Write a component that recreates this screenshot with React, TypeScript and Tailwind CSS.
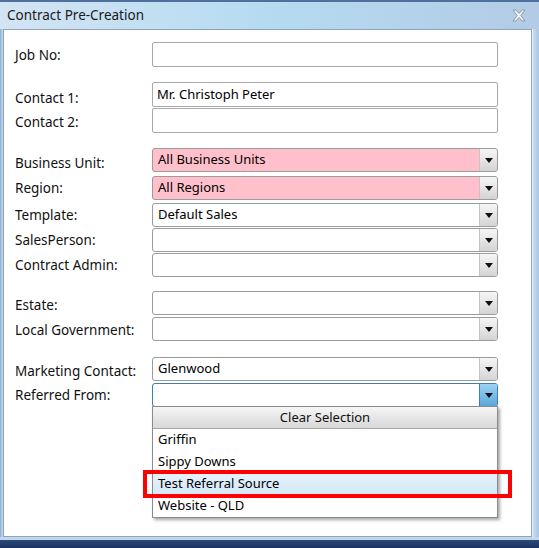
import React from "react";

const font = { fontFamily: '"Noto Sans", "Open Sans", sans-serif' };

function Arrow({ active }: { active?: boolean }) {
  return (
    <div
      className={
        "w-[18px] h-full shrink-0 flex items-center justify-center border-l " +
        (active
          ? "bg-gradient-to-b from-[#9dd3f3] to-[#5aa6da] border-[#3c7fb1]"
          : "bg-gradient-to-b from-[#f6f6f6] to-[#d4d4d4] border-[#c4c4c4]")
      }
    >
      <svg width="8" height="5" viewBox="0 0 8 5">
        <path d="M0 0 H8 L4 5 Z" fill="#111" />
      </svg>
    </div>
  );
}

function TextBox({ value }: { value?: string }) {
  return (
    <div className="w-[346px] h-[25px] shrink-0 border border-[#a7a9ad] rounded-[2px] bg-white flex items-center pl-[4px] text-[13px] text-black whitespace-nowrap">
      {value}
    </div>
  );
}

function Combo({ value, pink, active }: { value?: string; pink?: boolean; active?: boolean }) {
  return (
    <div
      className={
        "w-[346px] h-[24px] shrink-0 border rounded-[3px] overflow-hidden flex " +
        (active ? "border-[#3c7fb1]" : "border-[#9a9b9d]") +
        " " +
        (pink ? "bg-[#ffc0cb]" : "bg-white")
      }
    >
      <div className="flex-1 flex items-center pl-[5px] text-[13px] text-black whitespace-nowrap">{value}</div>
      <Arrow active={active} />
    </div>
  );
}

function Row({
  label,
  children,
  mt,
  lo = "",
}: {
  label: string;
  children: React.ReactNode;
  mt: string;
  lo?: string;
}) {
  return (
    <div className={"flex items-center " + mt}>
      <div className={"w-[148px] shrink-0 pl-[11px] text-[13.5px] leading-[18px] text-[#111] whitespace-nowrap relative " + lo}>
        {label}
      </div>
      {children}
    </div>
  );
}

export default function App() {
  return (
    <div className="w-[539px] h-[548px] relative flex flex-col overflow-hidden bg-[#bcd3ea]" style={font}>
      {/* title bar */}
      <div className="h-[29px] shrink-0 flex items-center justify-between bg-gradient-to-r from-[#d3e4f4] via-[#b5dbf1] to-[#b3cbe6] border-t-[2px] border-[#4f6f9c]">
        <span className="pl-[7px] text-[13.5px] text-[#1a1a1a]">Contract Pre-Creation</span>
        <svg width="14" height="13" viewBox="0 0 14 13" className="mr-[13px]">
          <path
            d="M1 1 L4 1 L7 4.5 L10 1 L13 1 L8.8 6.5 L13 12 L10 12 L7 8.5 L4 12 L1 12 L5.2 6.5 Z"
            fill="#f2f5f8"
            stroke="#8d9aa8"
            strokeWidth="1"
            strokeLinejoin="round"
          />
        </svg>
      </div>
      <div className="flex h-[508px] shrink-0">
        <div className="w-[3px] bg-gradient-to-r from-[#8fb0d3] to-[#c8dcef]" />
        <div className="w-[529px] bg-white border border-[#8ea4bd] flex flex-col">
          <Row label="Job No:" mt="mt-[12px]">
            <TextBox />
          </Row>
          <Row label="Contact 1:" mt="mt-[15px]" lo="top-[3px]">
            <TextBox value="Mr. Christoph Peter" />
          </Row>
          <Row label="Contact 2:" mt="mt-[1px]" lo="top-[1px]">
            <TextBox />
          </Row>
          <Row label="Business Unit:" mt="mt-[15px]" lo="top-[3px]">
            <Combo value="All Business Units" pink />
          </Row>
          <Row label="Region:" mt="mt-[4px]">
            <Combo value="All Regions" pink />
          </Row>
          <Row label="Template:" mt="mt-[3px]">
            <Combo value="Default Sales" />
          </Row>
          <Row label="SalesPerson:" mt="mt-[1px]">
            <Combo />
          </Row>
          <Row label="Contract Admin:" mt="mt-[1px]">
            <Combo />
          </Row>
          <Row label="Estate:" mt="mt-[14px]" lo="top-[2px]">
            <Combo />
          </Row>
          <Row label="Local Government:" mt="mt-[2px]" lo="top-[1px]">
            <Combo />
          </Row>
          <Row label="Marketing Contact:" mt="mt-[16px]" lo="top-[2px]">
            <Combo value="Glenwood" />
          </Row>
          <Row label="Referred From:" mt="mt-[2px]">
            <Combo active />
          </Row>
        </div>
        <div className="w-[7px] bg-gradient-to-r from-[#c8dcef] to-[#a9c4e2] border-l border-[#e6eff8]" />
      </div>
      <div className="flex-1 flex flex-col">
        <div className="h-[3px] bg-[#c3d7ec]" />
        <div className="flex-1 bg-gradient-to-b from-[#2c4a7a] to-[#1b3261]" />
      </div>

      {/* dropdown popup */}
      <div className="absolute left-[152px] top-[406px] w-[346px] h-[112px] bg-white border border-[#8b8b8b] shadow-[2px_2px_3px_rgba(0,0,0,0.35)] flex flex-col">
        <div className="h-[22px] flex items-center justify-center bg-gradient-to-b from-[#f6f6f6] to-[#d8d8d8] border-b border-[#a8a8a8] text-[13px] text-[#111]">
          Clear Selection
        </div>
        <div className="h-[22px] flex items-center pl-[5px] text-[13px] text-black">Griffin</div>
        <div className="h-[22px] flex items-center pl-[5px] text-[13px] text-black">Sippy Downs</div>
        <div className="h-[22px] flex items-center pl-[5px] text-[13px] text-black bg-gradient-to-b from-[#e6f2fb] to-[#d3e8f7]">
          Test Referral Source
        </div>
        <div className="h-[22px] flex items-center pl-[5px] text-[13px] text-black">Website - QLD</div>
      </div>

      {/* red highlight */}
      <div className="absolute left-[143px] top-[470px] w-[369px] h-[28px] border-[4px] border-[#ff0000]" />
    </div>
  );
}
